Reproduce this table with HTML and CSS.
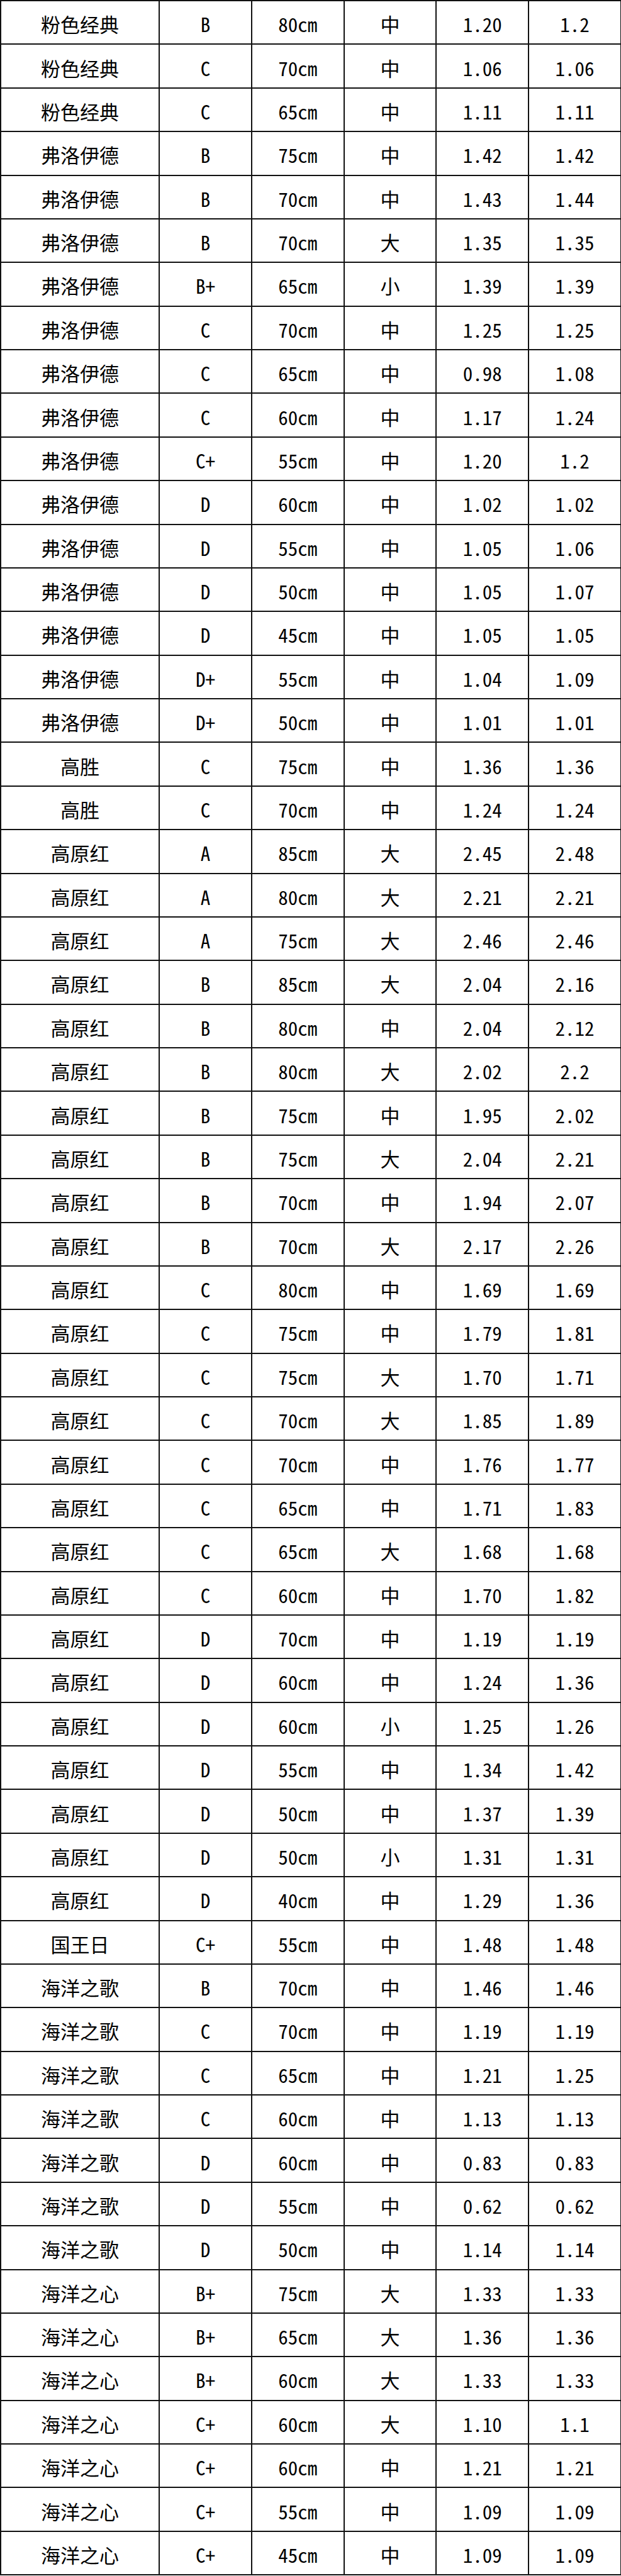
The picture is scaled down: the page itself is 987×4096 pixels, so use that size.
FILE: index.html
```html
<!DOCTYPE html>
<html lang="zh-CN">
<head>
<meta charset="utf-8">
<title>表格</title>
<link rel="stylesheet" href="styles.css">
</head>
<body>
<table class="sheet">
<colgroup><col class="c-name"><col class="c-x"><col class="c-x"><col class="c-x"><col class="c-x"><col class="c-x"></colgroup>
<tbody>
<tr><td>粉色经典</td><td>B</td><td>80cm</td><td>中</td><td>1.20</td><td>1.2</td></tr>
<tr><td>粉色经典</td><td>C</td><td>70cm</td><td>中</td><td>1.06</td><td>1.06</td></tr>
<tr><td>粉色经典</td><td>C</td><td>65cm</td><td>中</td><td>1.11</td><td>1.11</td></tr>
<tr><td>弗洛伊德</td><td>B</td><td>75cm</td><td>中</td><td>1.42</td><td>1.42</td></tr>
<tr><td>弗洛伊德</td><td>B</td><td>70cm</td><td>中</td><td>1.43</td><td>1.44</td></tr>
<tr><td>弗洛伊德</td><td>B</td><td>70cm</td><td>大</td><td>1.35</td><td>1.35</td></tr>
<tr><td>弗洛伊德</td><td>B+</td><td>65cm</td><td>小</td><td>1.39</td><td>1.39</td></tr>
<tr><td>弗洛伊德</td><td>C</td><td>70cm</td><td>中</td><td>1.25</td><td>1.25</td></tr>
<tr><td>弗洛伊德</td><td>C</td><td>65cm</td><td>中</td><td>0.98</td><td>1.08</td></tr>
<tr><td>弗洛伊德</td><td>C</td><td>60cm</td><td>中</td><td>1.17</td><td>1.24</td></tr>
<tr><td>弗洛伊德</td><td>C+</td><td>55cm</td><td>中</td><td>1.20</td><td>1.2</td></tr>
<tr><td>弗洛伊德</td><td>D</td><td>60cm</td><td>中</td><td>1.02</td><td>1.02</td></tr>
<tr><td>弗洛伊德</td><td>D</td><td>55cm</td><td>中</td><td>1.05</td><td>1.06</td></tr>
<tr><td>弗洛伊德</td><td>D</td><td>50cm</td><td>中</td><td>1.05</td><td>1.07</td></tr>
<tr><td>弗洛伊德</td><td>D</td><td>45cm</td><td>中</td><td>1.05</td><td>1.05</td></tr>
<tr><td>弗洛伊德</td><td>D+</td><td>55cm</td><td>中</td><td>1.04</td><td>1.09</td></tr>
<tr><td>弗洛伊德</td><td>D+</td><td>50cm</td><td>中</td><td>1.01</td><td>1.01</td></tr>
<tr><td>高胜</td><td>C</td><td>75cm</td><td>中</td><td>1.36</td><td>1.36</td></tr>
<tr><td>高胜</td><td>C</td><td>70cm</td><td>中</td><td>1.24</td><td>1.24</td></tr>
<tr><td>高原红</td><td>A</td><td>85cm</td><td>大</td><td>2.45</td><td>2.48</td></tr>
<tr><td>高原红</td><td>A</td><td>80cm</td><td>大</td><td>2.21</td><td>2.21</td></tr>
<tr><td>高原红</td><td>A</td><td>75cm</td><td>大</td><td>2.46</td><td>2.46</td></tr>
<tr><td>高原红</td><td>B</td><td>85cm</td><td>大</td><td>2.04</td><td>2.16</td></tr>
<tr><td>高原红</td><td>B</td><td>80cm</td><td>中</td><td>2.04</td><td>2.12</td></tr>
<tr><td>高原红</td><td>B</td><td>80cm</td><td>大</td><td>2.02</td><td>2.2</td></tr>
<tr><td>高原红</td><td>B</td><td>75cm</td><td>中</td><td>1.95</td><td>2.02</td></tr>
<tr><td>高原红</td><td>B</td><td>75cm</td><td>大</td><td>2.04</td><td>2.21</td></tr>
<tr><td>高原红</td><td>B</td><td>70cm</td><td>中</td><td>1.94</td><td>2.07</td></tr>
<tr><td>高原红</td><td>B</td><td>70cm</td><td>大</td><td>2.17</td><td>2.26</td></tr>
<tr><td>高原红</td><td>C</td><td>80cm</td><td>中</td><td>1.69</td><td>1.69</td></tr>
<tr><td>高原红</td><td>C</td><td>75cm</td><td>中</td><td>1.79</td><td>1.81</td></tr>
<tr><td>高原红</td><td>C</td><td>75cm</td><td>大</td><td>1.70</td><td>1.71</td></tr>
<tr><td>高原红</td><td>C</td><td>70cm</td><td>大</td><td>1.85</td><td>1.89</td></tr>
<tr><td>高原红</td><td>C</td><td>70cm</td><td>中</td><td>1.76</td><td>1.77</td></tr>
<tr><td>高原红</td><td>C</td><td>65cm</td><td>中</td><td>1.71</td><td>1.83</td></tr>
<tr><td>高原红</td><td>C</td><td>65cm</td><td>大</td><td>1.68</td><td>1.68</td></tr>
<tr><td>高原红</td><td>C</td><td>60cm</td><td>中</td><td>1.70</td><td>1.82</td></tr>
<tr><td>高原红</td><td>D</td><td>70cm</td><td>中</td><td>1.19</td><td>1.19</td></tr>
<tr><td>高原红</td><td>D</td><td>60cm</td><td>中</td><td>1.24</td><td>1.36</td></tr>
<tr><td>高原红</td><td>D</td><td>60cm</td><td>小</td><td>1.25</td><td>1.26</td></tr>
<tr><td>高原红</td><td>D</td><td>55cm</td><td>中</td><td>1.34</td><td>1.42</td></tr>
<tr><td>高原红</td><td>D</td><td>50cm</td><td>中</td><td>1.37</td><td>1.39</td></tr>
<tr><td>高原红</td><td>D</td><td>50cm</td><td>小</td><td>1.31</td><td>1.31</td></tr>
<tr><td>高原红</td><td>D</td><td>40cm</td><td>中</td><td>1.29</td><td>1.36</td></tr>
<tr><td>国王日</td><td>C+</td><td>55cm</td><td>中</td><td>1.48</td><td>1.48</td></tr>
<tr><td>海洋之歌</td><td>B</td><td>70cm</td><td>中</td><td>1.46</td><td>1.46</td></tr>
<tr><td>海洋之歌</td><td>C</td><td>70cm</td><td>中</td><td>1.19</td><td>1.19</td></tr>
<tr><td>海洋之歌</td><td>C</td><td>65cm</td><td>中</td><td>1.21</td><td>1.25</td></tr>
<tr><td>海洋之歌</td><td>C</td><td>60cm</td><td>中</td><td>1.13</td><td>1.13</td></tr>
<tr><td>海洋之歌</td><td>D</td><td>60cm</td><td>中</td><td>0.83</td><td>0.83</td></tr>
<tr><td>海洋之歌</td><td>D</td><td>55cm</td><td>中</td><td>0.62</td><td>0.62</td></tr>
<tr><td>海洋之歌</td><td>D</td><td>50cm</td><td>中</td><td>1.14</td><td>1.14</td></tr>
<tr><td>海洋之心</td><td>B+</td><td>75cm</td><td>大</td><td>1.33</td><td>1.33</td></tr>
<tr><td>海洋之心</td><td>B+</td><td>65cm</td><td>大</td><td>1.36</td><td>1.36</td></tr>
<tr><td>海洋之心</td><td>B+</td><td>60cm</td><td>大</td><td>1.33</td><td>1.33</td></tr>
<tr><td>海洋之心</td><td>C+</td><td>60cm</td><td>大</td><td>1.10</td><td>1.1</td></tr>
<tr><td>海洋之心</td><td>C+</td><td>60cm</td><td>中</td><td>1.21</td><td>1.21</td></tr>
<tr><td>海洋之心</td><td>C+</td><td>55cm</td><td>中</td><td>1.09</td><td>1.09</td></tr>
<tr><td>海洋之心</td><td>C+</td><td>45cm</td><td>中</td><td>1.09</td><td>1.09</td></tr>
</tbody>
</table>
</body>
</html>
```

FILE: styles.css
```css
html, body {
  margin: 0;
  padding: 0;
  background: #ffffff;
}

.sheet {
  width: 986px;
  border-collapse: collapse;
  table-layout: fixed;
  font-family: "Noto Sans Mono CJK SC", "Noto Sans CJK SC", "Liberation Mono", monospace;
  font-size: 31px;
  color: #000000;
}

.c-name {
  width: 252px;
}

.c-x {
  width: 146.8px;
}

.sheet tr {
  height: 69.39px;
}

.sheet td {
  border: 2px solid #111111;
  padding: 4px 0 0 0;
  text-align: center;
  vertical-align: middle;
  line-height: 1;
  white-space: nowrap;
}
```
